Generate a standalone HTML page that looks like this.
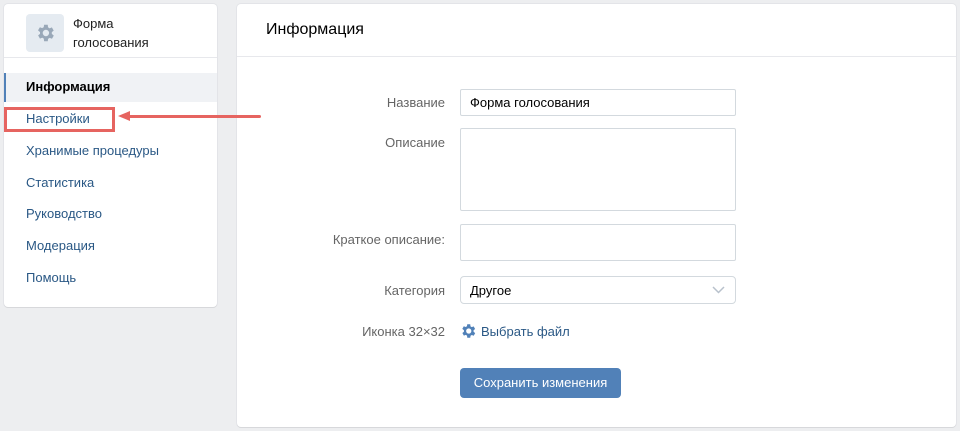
<!DOCTYPE html>
<html><head><meta charset="utf-8"><style>
*{box-sizing:border-box;margin:0;padding:0}
body{width:960px;height:431px;background:#edeef0;font-family:"Liberation Sans",sans-serif;font-size:13px;color:#000;position:relative;overflow:hidden}
.card{position:absolute;background:#fff;border-radius:4px;box-shadow:0 1px 0 0 #d7d8db,0 0 0 1px #e3e4e8}
.l{left:4px;top:4px;width:213px;height:303px}
.r{left:237px;top:4px;width:719px;height:423px}
.nav{position:absolute;left:26px;color:#2a5885;font-size:13px}
.lab{position:absolute;right:515px;color:#656565;text-align:right}
.in{position:absolute;left:460px;width:276px;border:1px solid #d3d9de;border-radius:2px;background:#fff}
</style></head><body>
<div class="card l">
 <div style="position:absolute;left:22px;top:10px;width:38px;height:38px;background:#e5ebf1;border-radius:4px"></div>
 <svg style="position:absolute;left:30px;top:18px" width="22" height="22" viewBox="0 0 24 24"><path fill="#99a8b8" d="M19.4 13a7.5 7.5 0 0 0 0-2l2.1-1.6-2-3.5-2.5 1a7 7 0 0 0-1.700-1L15 3h-4l-.4 2.7a7 7 0 0 0-1.7 1l-2.5-1-2 3.5L6.6 11a7.5 7.5 0 0 0 0 2l-2.1 1.6 2 3.5 2.5-1a7 7 0 0 0 1.7 1L11 21h4l.4-2.7a7 7 0 0 0 1.7-1l2.5 1 2-3.5zM13 15.5a3.5 3.5 0 1 1 0-7 3.5 3.5 0 0 1 0 7z"/></svg>
 <div style="position:absolute;left:69px;top:10px;line-height:19px;color:#222">Форма<br>голосования</div>
 <div style="position:absolute;left:0;right:0;top:53px;border-top:1px solid #e7e8ec"></div>
 <div style="position:absolute;left:0;right:0;top:69px;height:29px;background:#f0f2f5;border-left:2px solid #5181b8"></div>
</div>
<div class="nav" style="top:79px;color:#000;font-weight:bold">Информация</div>
<div class="nav" style="top:111px">Настройки</div>
<div class="nav" style="top:143px">Хранимые процедуры</div>
<div class="nav" style="top:175px">Статистика</div>
<div class="nav" style="top:206px">Руководство</div>
<div class="nav" style="top:238px">Модерация</div>
<div class="nav" style="top:270px">Помощь</div>

<div class="card r">
 <div style="position:absolute;left:29px;top:17px;font-size:16px;color:#000">Информация</div>
 <div style="position:absolute;left:0;right:0;top:52px;border-top:1px solid #e7e8ec"></div>
</div>
<div style="position:absolute;left:4px;top:107px;width:111px;height:25px;border:3px solid #e66460"></div>
<div style="position:absolute;left:128px;top:115px;width:133px;height:3px;background:#e66460;border-radius:2px"></div>
<div style="position:absolute;left:118px;top:111px;width:0;height:0;border-top:5px solid transparent;border-bottom:5px solid transparent;border-right:12px solid #e66460"></div>
<div class="lab" style="top:95px">Название</div>
<div class="in" style="top:89px;height:27px;padding:5px 9px;color:#000">Форма голосования</div>
<div class="lab" style="top:135px">Описание</div>
<div class="in" style="top:128px;height:83px"></div>
<div class="lab" style="top:232px">Краткое описание:</div>
<div class="in" style="top:224px;height:37px"></div>
<div class="lab" style="top:283px">Категория</div>
<div class="in" style="top:276px;height:28px;padding:6px 9px;border-radius:4px">Другое
 <svg style="position:absolute;right:10px;top:9px" width="13" height="8" viewBox="0 0 13 8"><path d="M1 1l5.5 5.5L12 1" fill="none" stroke="#b8c1cc" stroke-width="1.5"/></svg></div>
<div class="lab" style="top:324px">Иконка 32×32</div>
<svg style="position:absolute;left:459px;top:322px" width="18" height="18" viewBox="0 0 24 24"><path fill="#5181b8" d="M19.4 13a7.5 7.5 0 0 0 0-2l2.1-1.6-2-3.5-2.5 1a7 7 0 0 0-1.7-1L15 3h-4l-.4 2.7a7 7 0 0 0-1.7 1l-2.5-1-2 3.5L6.6 11a7.5 7.5 0 0 0 0 2l-2.1 1.6 2 3.5 2.5-1a7 7 0 0 0 1.7 1L11 21h4l.4-2.7a7 7 0 0 0 1.7-1l2.5 1 2-3.5zM13 15.5a3.5 3.5 0 1 1 0-7 3.5 3.5 0 0 1 0 7z"/></svg>
<div style="position:absolute;left:481px;top:324px;color:#2a5885">Выбрать файл</div>
<div style="position:absolute;left:460px;top:368px;width:161px;height:30px;background:#5181b8;border-radius:4px;color:#fff;text-align:center;line-height:30px">Сохранить изменения</div>
</body></html>
